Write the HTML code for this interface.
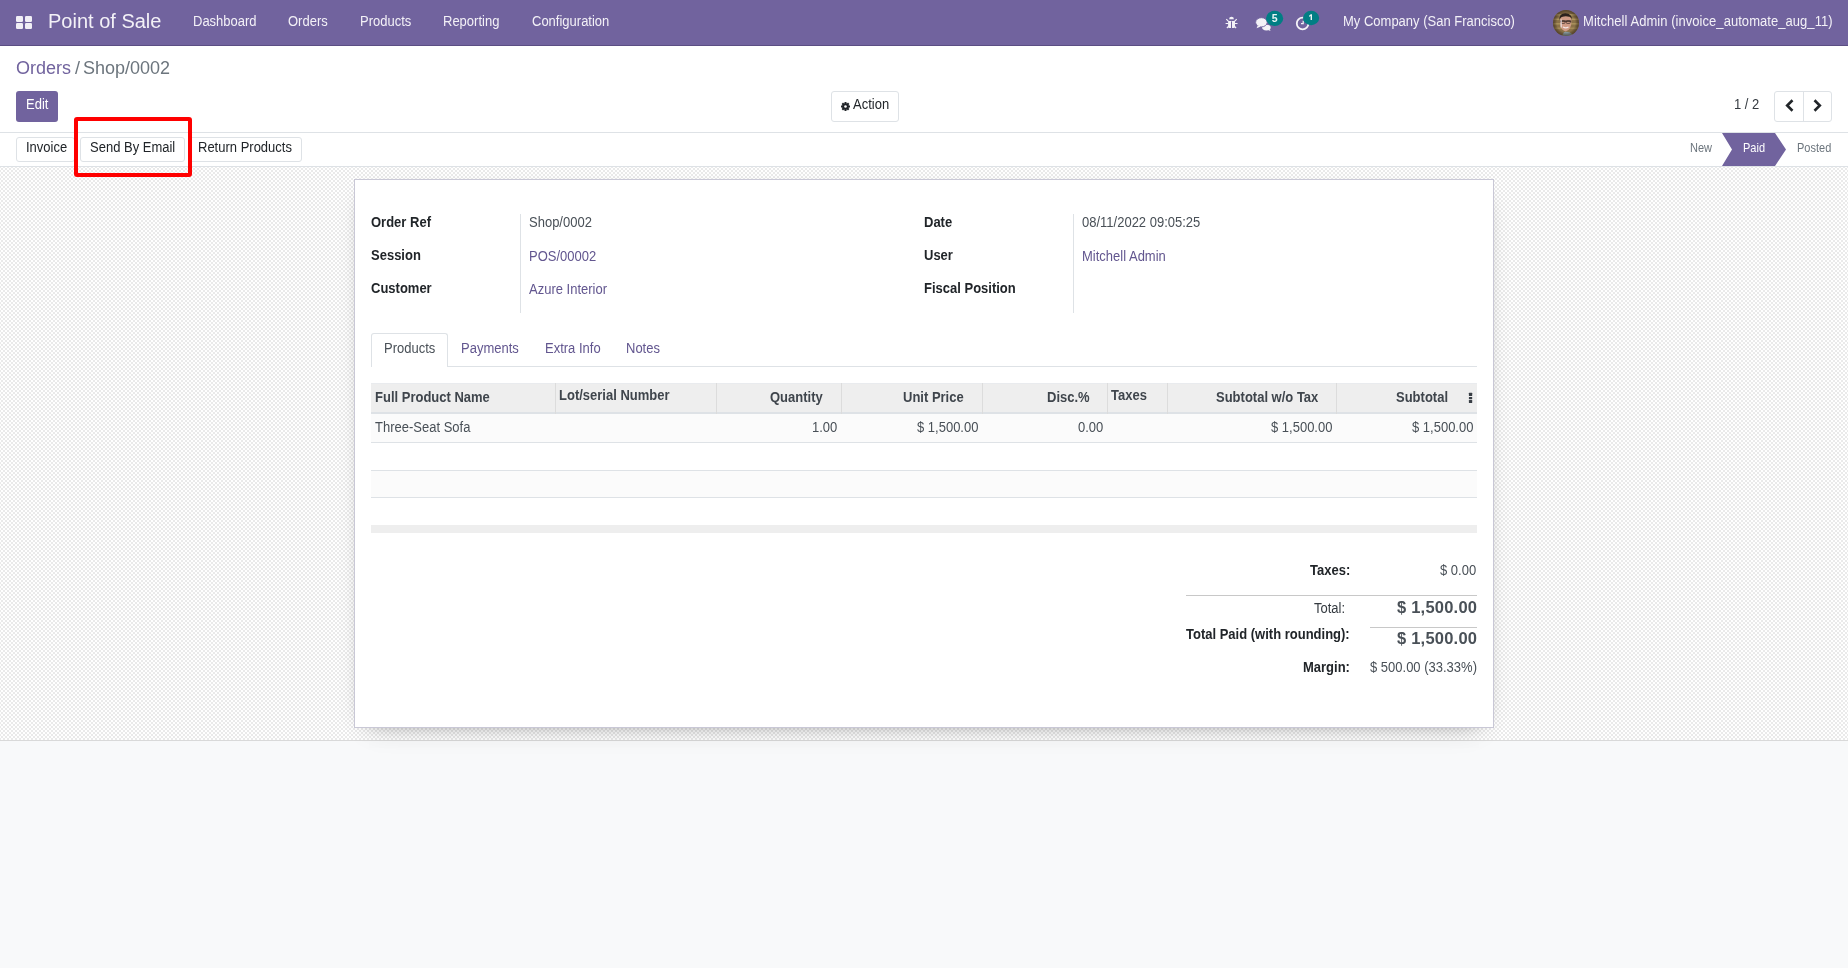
<!DOCTYPE html>
<html><head><meta charset="utf-8">
<style>
*{box-sizing:border-box;margin:0;padding:0}
body{will-change:transform}
html,body{width:1848px;height:968px;overflow:hidden;background:#f8f9fa;font-family:"Liberation Sans",sans-serif;font-size:13px;color:#212529}
.a{position:absolute;white-space:nowrap;line-height:20px}
.t{transform:scaleY(1.1);transform-origin:0 5px}
#nav{position:absolute;left:0;top:0;width:1848px;height:46px;background:#71639e;border-bottom:1px solid #5b4e83}
.nt{color:#f3f1f7}
#cp{position:absolute;left:0;top:46px;width:1848px;height:87px;background:#fff;border-bottom:1px solid #dee2e6}
#sb{position:absolute;left:0;top:133px;width:1848px;height:34px;background:#fff;border-bottom:1px solid #dee2e6}
#bg{position:absolute;left:0;top:167px;width:1848px;height:574px;border-bottom:1px solid #d9d9d9;
  background-color:#fff;
  background-image:conic-gradient(#eaeaea 25%,#fff 0 50%,#eaeaea 0 75%,#fff 0);
  background-size:4px 4px;background-position:1px -1px}
#sheet{position:absolute;left:354px;top:179px;width:1140px;height:549px;background:#fff;border:1px solid #c9c8d6;box-shadow:0 5px 20px -15px rgba(0,0,0,.6),0 12px 30px -16px rgba(0,0,0,.16)}
.btn{position:absolute;border:1px solid #dee2e6;border-radius:3px;background:#fff}
.lbl{font-weight:700;color:#212529}
.val{color:#495057}
.lnk{color:#62568f}
.th{font-weight:700;color:#3f454c}
</style></head><body>

<!-- NAVBAR -->
<div id="nav">
  <svg class="a" style="left:16px;top:16px" width="16" height="13" viewBox="0 0 16 13">
    <rect x="0" y="0" width="7" height="6" rx="1.2" fill="#f1eff6"/>
    <rect x="9" y="0" width="7" height="6" rx="1.2" fill="#f1eff6"/>
    <rect x="0" y="7" width="7" height="6" rx="1.2" fill="#f1eff6"/>
    <rect x="9" y="7" width="7" height="6" rx="1.2" fill="#f1eff6"/>
  </svg>
  <div class="a nt" style="left:48px;top:11px;font-size:20px">Point of Sale</div>
  <div class="a nt t" style="left:193px;top:11px">Dashboard</div>
  <div class="a nt t" style="left:288px;top:11px">Orders</div>
  <div class="a nt t" style="left:360px;top:11px">Products</div>
  <div class="a nt t" style="left:443px;top:11px">Reporting</div>
  <div class="a nt t" style="left:532px;top:11px">Configuration</div>

  <!-- bug -->
  <svg class="a" style="left:1222px;top:14px" width="20" height="18" viewBox="0 0 20 18">
    <path d="M7.1 5.3 A2.4 2.5 0 0 1 11.9 5.3 Z" fill="#f3f1f7"/>
    <path d="M6.1 6.9 H13 V12.8 Q13 14.1 11.8 14.1 H7.3 Q6.1 14.1 6.1 12.8 Z" fill="#f3f1f7"/>
    <rect x="9" y="7.4" width="1" height="6.8" fill="#71639e"/>
    <path d="M4.3 5.1 L6.5 7.3 M14.7 5.1 L12.5 7.3 M3.6 9.5 H6.3 M12.8 9.5 H15.5 M4.9 14 L6.7 12.2 M14.1 14 L12.3 12.2" stroke="#f3f1f7" stroke-width="1.2" fill="none"/>
  </svg>
  <!-- chat -->
  <svg class="a" style="left:1252px;top:8px" width="36" height="26" viewBox="0 0 36 26">
    <ellipse cx="14.4" cy="19.6" rx="4.3" ry="2.8" fill="#f3f1f7"/>
    <path d="M16 21.5 L18.2 22.3 L15.5 20.5 Z" fill="#f3f1f7" stroke="#f3f1f7" stroke-width="0.8"/>
    <ellipse cx="9.4" cy="14.3" rx="5.8" ry="4.6" fill="#f3f1f7" stroke="#71639e" stroke-width="0.9"/>
    <path d="M5.8 17.2 L4.6 20.2 L8.8 18.6 Z" fill="#f3f1f7"/>
    <ellipse cx="22.6" cy="10.4" rx="8.6" ry="7.6" fill="#017e84"/>
    <text x="22.6" y="13.6" text-anchor="middle" font-family="Liberation Sans" font-weight="700" font-size="10.5" fill="#e9f5f5">5</text>
  </svg>
  <!-- clock -->
  <svg class="a" style="left:1290px;top:8px" width="36" height="26" viewBox="0 0 36 26">
    <circle cx="12.6" cy="15.5" r="5.8" fill="none" stroke="#f5f3f8" stroke-width="1.8"/>
    <path d="M13.2 12.8 V15.7 H11" stroke="#f5f3f8" stroke-width="1.2" fill="none"/>
    <ellipse cx="21.1" cy="10" rx="8.1" ry="7.2" fill="#017e84"/>
    <path d="M19.2 7.6 L20.8 6.2 H22 V12 H20.6 V8.1 L19.2 8.9 Z" fill="#e9f5f5"/>
  </svg>
  <div class="a nt t" style="left:1343px;top:11px">My Company (San Francisco)</div>
  <!-- avatar -->
  <svg class="a" style="left:1553px;top:10px" width="26" height="26" viewBox="0 0 26 26">
    <defs><clipPath id="cc"><circle cx="13" cy="13" r="13"/></clipPath>
    <radialGradient id="vg" cx="50%" cy="50%" r="50%"><stop offset="70%" stop-color="#000" stop-opacity="0"/><stop offset="100%" stop-color="#2a1d10" stop-opacity=".55"/></radialGradient></defs>
    <g clip-path="url(#cc)">
      <rect width="26" height="26" fill="#8a7148"/>
      <rect x="0" y="4" width="26" height="1.6" fill="#b39a64"/>
      <rect x="0" y="8.5" width="26" height="1.6" fill="#ad945e"/>
      <rect x="0" y="13" width="26" height="1.6" fill="#a88f5a"/>
      <rect x="0" y="17.5" width="26" height="1.6" fill="#a38a57"/>
      <path d="M7 10 Q6.5 20 12.5 21.5 Q18.5 20.5 18.5 10 Q18 6 12.5 6 Q7.5 6 7 10 Z" fill="#cf9b86"/>
      <path d="M6.2 10.5 Q6 3 12.5 3.2 Q19.2 3.5 19.2 10.5 Q18.5 7.5 17 6.8 Q12.5 5.6 8.5 7 Q6.8 8 6.2 10.5 Z" fill="#2b221d"/>
      <path d="M7.2 11.2 H18.2" stroke="#3a2c26" stroke-width="1.3"/>
      <rect x="8" y="10.8" width="4" height="2.6" rx="0.8" fill="none" stroke="#3a2c26" stroke-width="0.7"/>
      <rect x="13.3" y="10.8" width="4" height="2.6" rx="0.8" fill="none" stroke="#3a2c26" stroke-width="0.7"/>
      <rect x="7.4" y="9.5" width="1.6" height="8" fill="#eee6ea" opacity=".7"/>
      <path d="M10 17 Q12.7 18.8 15.5 17" stroke="#f3e6e6" stroke-width="1.1" fill="none"/>
      <path d="M11 22 Q16 21 19 24 L20 26 H9 Z" fill="#8b9ea3"/>
      <rect width="26" height="26" fill="url(#vg)"/>
    </g>
  </svg>
  <div class="a nt t" style="left:1583px;top:11px;letter-spacing:0.05px">Mitchell Admin (invoice_automate_aug_11)</div>
</div>

<!-- CONTROL PANEL -->
<div id="cp">
  <div class="a" style="left:16px;top:12px;font-size:18px;line-height:20px;color:#71639e">Orders</div>
  <div class="a" style="left:75px;top:12px;font-size:18px;line-height:20px;color:#6c757d">/</div>
  <div class="a" style="left:83px;top:12px;font-size:18px;line-height:20px;color:#6c757d">Shop/0002</div>
  <div class="a" style="left:16px;top:45px;width:42px;height:31px;background:#71639e;border-radius:3px"></div>
  <div class="a t" style="left:26px;top:48px;color:#fff">Edit</div>
  <div class="btn" style="left:831px;top:45px;width:68px;height:31px"></div>
  <svg class="a" style="left:841px;top:56px" width="9" height="9" viewBox="0 0 9 9">
    <g fill="#212529">
      <circle cx="4.5" cy="4.5" r="3.3"/>
      <rect x="3.5" y="0" width="2" height="9"/>
      <rect x="0" y="3.5" width="9" height="2"/>
      <rect x="3.5" y="0" width="2" height="9" transform="rotate(45 4.5 4.5)"/>
      <rect x="3.5" y="0" width="2" height="9" transform="rotate(-45 4.5 4.5)"/>
    </g>
    <circle cx="4.5" cy="4.5" r="1.3" fill="#fff"/>
  </svg>
  <div class="a t" style="left:853px;top:48px">Action</div>
  <div class="a t" style="left:1734px;top:48px;color:#343a40">1 / 2</div>
  <div class="btn" style="left:1774px;top:45px;width:58px;height:31px"></div>
  <div class="a" style="left:1803px;top:46px;width:1px;height:29px;background:#dee2e6"></div>
  <svg class="a" style="left:1785px;top:53px" width="9" height="13" viewBox="0 0 9 13">
    <path d="M7.5 1.3 L2.2 6.5 L7.5 11.7" stroke="#212529" stroke-width="2.6" fill="none"/>
  </svg>
  <svg class="a" style="left:1812.5px;top:53px" width="9" height="13" viewBox="0 0 9 13">
    <path d="M1.5 1.3 L6.8 6.5 L1.5 11.7" stroke="#212529" stroke-width="2.6" fill="none"/>
  </svg>
</div>

<!-- STATUS BAR -->
<div id="sb">
  <div class="btn" style="left:16px;top:4px;width:59px;height:25px"></div>
  <div class="a t" style="left:26px;top:4px">Invoice</div>
  <div class="btn" style="left:80px;top:4px;width:105px;height:25px"></div>
  <div class="a t" style="left:90px;top:4px">Send By Email</div>
  <div class="btn" style="left:188px;top:4px;width:114px;height:25px"></div>
  <div class="a t" style="left:198px;top:4px">Return Products</div>

  <div class="a t" style="left:1690px;top:4px;font-size:11px;color:#6c757d">New</div>
  <svg class="a" style="left:1722px;top:0px" width="65" height="33" viewBox="0 0 65 33">
    <path d="M0 0 H53 L64 16.5 L53 33 H0 L10 16.5 Z" fill="#71639e"/>
  </svg>
  <div class="a t" style="left:1743px;top:4px;font-size:11px;color:#fff">Paid</div>
  <div class="a t" style="left:1797px;top:4px;font-size:11px;color:#6c757d">Posted</div>
</div>

<!-- red highlight -->
<div class="a" style="left:74px;top:117px;width:118px;height:60px;border:4px solid #ff0000;border-radius:3px;z-index:5"></div>

<!-- SHEET BG -->
<div id="bg"></div>
<div id="sheet"></div>

<!-- form fields -->
<div class="a lbl t" style="left:371px;top:212px">Order Ref</div>
<div class="a lbl t" style="left:371px;top:245px">Session</div>
<div class="a lbl t" style="left:371px;top:278px">Customer</div>
<div class="a" style="left:520px;top:214px;width:1px;height:99px;background:#dee2e6"></div>
<div class="a val t" style="left:529px;top:212px">Shop/0002</div>
<div class="a lnk t" style="left:529px;top:246px">POS/00002</div>
<div class="a lnk t" style="left:529px;top:279px">Azure Interior</div>

<div class="a lbl t" style="left:924px;top:212px">Date</div>
<div class="a lbl t" style="left:924px;top:245px">User</div>
<div class="a lbl t" style="left:924px;top:278px">Fiscal Position</div>
<div class="a" style="left:1073px;top:214px;width:1px;height:99px;background:#dee2e6"></div>
<div class="a val t" style="left:1082px;top:212px">08/11/2022 09:05:25</div>
<div class="a lnk t" style="left:1082px;top:246px">Mitchell Admin</div>

<!-- tabs -->
<div class="a" style="left:371px;top:366px;width:1106px;height:1px;background:#dee2e6"></div>
<div class="a" style="left:371px;top:333px;width:77px;height:34px;background:#fff;border:1px solid #dee2e6;border-bottom:none;border-radius:3px 3px 0 0"></div>
<div class="a val t" style="left:384px;top:338px">Products</div>
<div class="a lnk t" style="left:461px;top:338px">Payments</div>
<div class="a lnk t" style="left:545px;top:338px">Extra Info</div>
<div class="a lnk t" style="left:626px;top:338px">Notes</div>

<!-- table -->
<div class="a" style="left:371px;top:383px;width:1106px;height:31px;background:#eeeeee;border-top:1px solid #e9ebee;border-bottom:2px solid #dee2e6"></div>
<div class="a" style="left:555px;top:383px;width:1px;height:31px;background:#dcdcdc"></div>
<div class="a" style="left:716px;top:383px;width:1px;height:31px;background:#dcdcdc"></div>
<div class="a" style="left:841px;top:383px;width:1px;height:31px;background:#dcdcdc"></div>
<div class="a" style="left:982px;top:383px;width:1px;height:31px;background:#dcdcdc"></div>
<div class="a" style="left:1107px;top:383px;width:1px;height:31px;background:#dcdcdc"></div>
<div class="a" style="left:1167px;top:383px;width:1px;height:31px;background:#dcdcdc"></div>
<div class="a" style="left:1336px;top:383px;width:1px;height:31px;background:#dcdcdc"></div>
<div class="a th t" style="left:375px;top:387px">Full Product Name</div>
<div class="a th t" style="left:559px;top:385px">Lot/serial Number</div>
<div class="a th t" style="left:770px;top:387px">Quantity</div>
<div class="a th t" style="left:903px;top:387px">Unit Price</div>
<div class="a th t" style="left:1047px;top:387px">Disc.%</div>
<div class="a th t" style="left:1111px;top:385px">Taxes</div>
<div class="a th t" style="left:1216px;top:387px">Subtotal w/o Tax</div>
<div class="a th t" style="left:1396px;top:387px">Subtotal</div>
<svg class="a" style="left:1468px;top:392px" width="5" height="12" viewBox="0 0 5 12">
  <rect x="0.9" y="0.8" width="3.3" height="3.1" rx="0.5" fill="#383e45"/>
  <rect x="0.9" y="4.9" width="3.3" height="2.3" rx="0.4" fill="#383e45"/>
  <rect x="0.9" y="8" width="3.3" height="3.1" rx="0.5" fill="#383e45"/>
</svg>

<div class="a" style="left:371px;top:414px;width:1106px;height:28px;background:#fbfbfb"></div>
<div class="a" style="left:371px;top:442px;width:1106px;height:1px;background:#dee2e6"></div>
<div class="a" style="left:371px;top:470px;width:1106px;height:1px;background:#dee2e6"></div>
<div class="a" style="left:371px;top:471px;width:1106px;height:26px;background:#fbfbfb"></div>
<div class="a" style="left:371px;top:497px;width:1106px;height:1px;background:#dee2e6"></div>
<div class="a" style="left:371px;top:525px;width:1106px;height:8px;background:#eeeeee"></div>

<div class="a val t" style="left:375px;top:417px">Three-Seat Sofa</div>
<div class="a val t" style="left:812px;top:417px">1.00</div>
<div class="a val t" style="left:917px;top:417px">$ 1,500.00</div>
<div class="a val t" style="left:1078px;top:417px">0.00</div>
<div class="a val t" style="left:1271px;top:417px">$ 1,500.00</div>
<div class="a val t" style="left:1412px;top:417px">$ 1,500.00</div>

<!-- totals -->
<div class="a lbl t" style="left:1310px;top:560px">Taxes:</div>
<div class="a val t" style="left:1440px;top:560px">$ 0.00</div>
<div class="a" style="left:1186px;top:595px;width:291px;height:1px;background:#c8c8c8"></div>
<div class="a t" style="left:1314px;top:598px;color:#343a40">Total:</div>
<div class="a val" style="left:1397px;top:597px;font-size:16.5px;font-weight:700;letter-spacing:0.22px">$ 1,500.00</div>
<div class="a" style="left:1370px;top:627px;width:107px;height:1px;background:#c8c8c8"></div>
<div class="a lbl t" style="left:1186px;top:624px">Total Paid (with rounding):</div>
<div class="a val" style="left:1397px;top:628px;font-size:16.5px;font-weight:700;letter-spacing:0.22px">$ 1,500.00</div>
<div class="a lbl t" style="left:1303px;top:657px">Margin:</div>
<div class="a val t" style="left:1370px;top:657px">$ 500.00 (33.33%)</div>

</body></html>
